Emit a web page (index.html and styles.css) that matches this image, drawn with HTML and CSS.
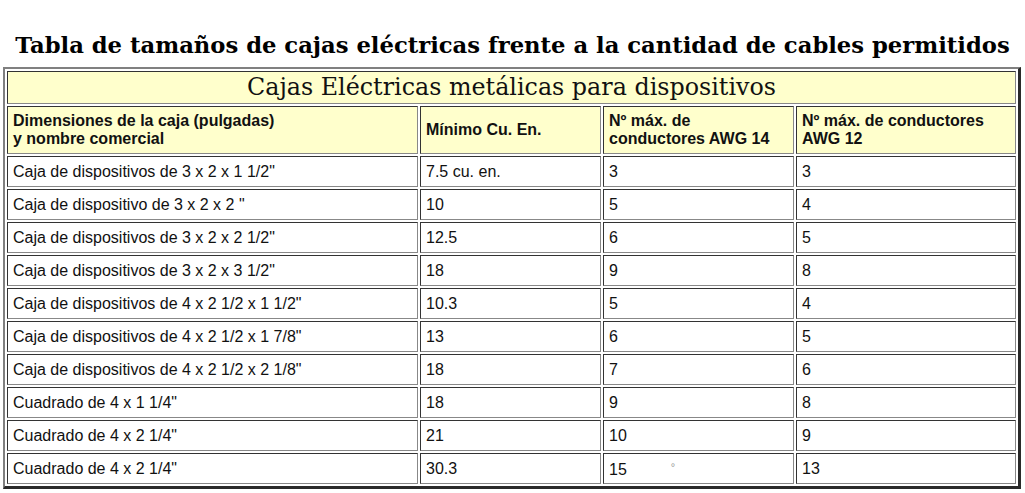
FILE: index.html
```html
<!DOCTYPE html>
<html lang="es">
<head>
<meta charset="utf-8">
<title>Cajas eléctricas</title>
<link rel="stylesheet" href="styles.css">
</head>
<body>
<h2 class="title">Tabla de tamaños de cajas eléctricas frente a la cantidad de cables permitidos</h2>
<table class="boxes">
  <tr><td class="caption" colspan="4">Cajas Eléctricas metálicas para dispositivos</td></tr>
  <tr class="head">
    <td class="c1">Dimensiones de la caja (pulgadas)<br>y nombre comercial</td>
    <td class="c2">Mínimo Cu. En.</td>
    <td class="c3">Nº máx. de<br>conductores AWG 14</td>
    <td class="c4">Nº máx. de conductores<br>AWG 12</td>
  </tr>
  <tr><td>Caja de dispositivos de 3 x 2 x 1 1/2"</td><td>7.5 cu. en.</td><td>3</td><td>3</td></tr>
  <tr><td>Caja de dispositivo de 3 x 2 x 2 "</td><td>10</td><td>5</td><td>4</td></tr>
  <tr><td>Caja de dispositivos de 3 x 2 x 2 1/2"</td><td>12.5</td><td>6</td><td>5</td></tr>
  <tr><td>Caja de dispositivos de 3 x 2 x 3 1/2"</td><td>18</td><td>9</td><td>8</td></tr>
  <tr><td>Caja de dispositivos de 4 x 2 1/2 x 1 1/2"</td><td>10.3</td><td>5</td><td>4</td></tr>
  <tr><td>Caja de dispositivos de 4 x 2 1/2 x 1 7/8"</td><td>13</td><td>6</td><td>5</td></tr>
  <tr><td>Caja de dispositivos de 4 x 2 1/2 x 2 1/8"</td><td>18</td><td>7</td><td>6</td></tr>
  <tr><td>Cuadrado de 4 x 1 1/4"</td><td>18</td><td>9</td><td>8</td></tr>
  <tr><td>Cuadrado de 4 x 2 1/4"</td><td>21</td><td>10</td><td>9</td></tr>
  <tr><td>Cuadrado de 4 x 2 1/4"</td><td>30.3</td><td>15<span class="deg">°</span></td><td>13</td></tr>
</table>
</body>
</html>
```
FILE: styles.css
```css
html, body {
  margin: 0;
  padding: 0;
  background: #ffffff;
}
body {
  padding: 32px 3px 0 3px;
  font-family: "Liberation Sans", Arial, sans-serif;
  color: #111;
}
.title {
  margin: 0 0 8px 0;
  text-align: center;
  font-family: "DejaVu Serif", serif;
  font-weight: bold;
  font-size: 22.7px;
  line-height: 27px;
  color: #000;
}
.boxes {
  width: 1018px;
  border-collapse: separate;
  border-spacing: 2px;
  border-style: solid;
  border-width: 2px 3px 3px 2px;
  border-color: #808080 #2a2a2a #2a2a2a #808080;
}
.boxes td {
  border: 1px solid;
  border-color: #333 #888 #888 #333;
  padding: 0 5px;
  height: 31px;
  box-sizing: border-box;
  font-size: 16px;
  line-height: 18px;
  vertical-align: middle;
  background: #fff;
}
.boxes td.caption {
  background: #ffffcc;
  text-align: center;
  font-family: "DejaVu Serif", serif;
  font-size: 23.8px;
  line-height: 27px;
  height: 33px;
  color: #111;
}
.head td {
  background: #ffffcc;
  font-weight: bold;
  font-size: 16px;
  line-height: 18px;
  height: 48px;
}
.c1 { width: 411px; }
.c2 { width: 181px; }
.c3 { width: 191px; }
.c4 { width: auto; }
.deg {
  margin-left: 44px;
  font-size: 11px;
  color: #999;
  vertical-align: 4px;
}
```
